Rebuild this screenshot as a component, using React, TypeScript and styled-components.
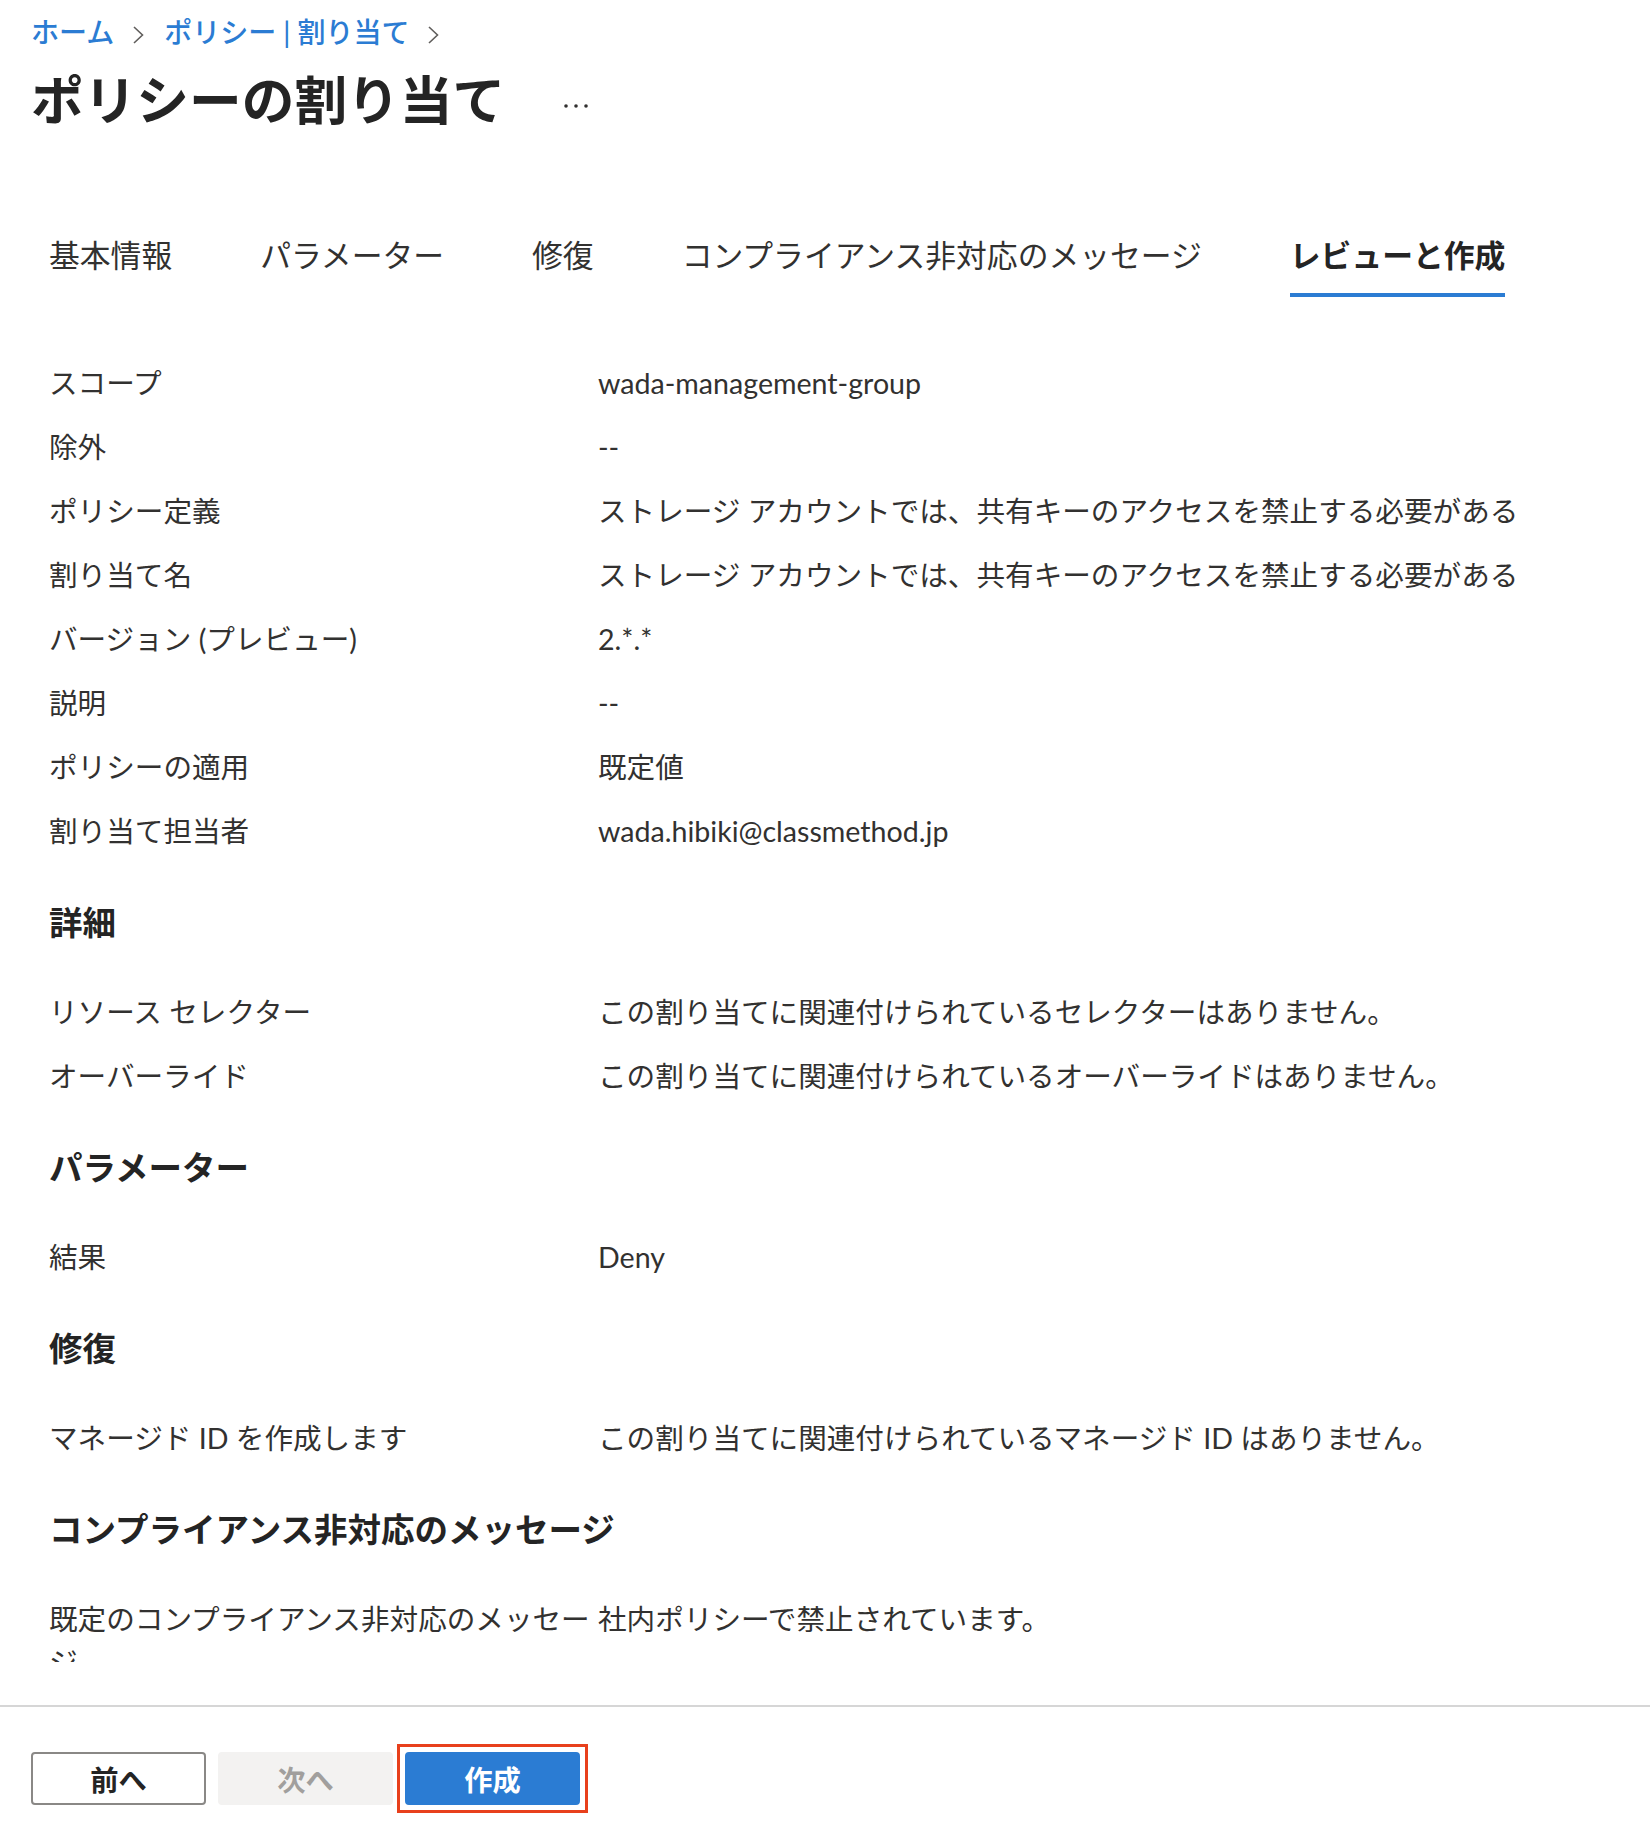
import React from 'react'
import styled, { createGlobalStyle } from 'styled-components'

interface Field {
  label: string
  value: string
}

interface Section {
  title?: string
  fields: Field[]
}

const POLICY_NAME = 'ストレージ アカウントでは、共有キーのアクセスを禁止する必要がある'

const sections: Section[] = [
  {
    fields: [
      { label: 'スコープ', value: 'wada-management-group' },
      { label: '除外', value: '--' },
      { label: 'ポリシー定義', value: POLICY_NAME },
      { label: '割り当て名', value: POLICY_NAME },
      { label: 'バージョン (プレビュー)', value: '2.*.*' },
      { label: '説明', value: '--' },
      { label: 'ポリシーの適用', value: '既定値' },
      { label: '割り当て担当者', value: 'wada.hibiki@classmethod.jp' },
    ],
  },
  {
    title: '詳細',
    fields: [
      { label: 'リソース セレクター', value: 'この割り当てに関連付けられているセレクターはありません。' },
      { label: 'オーバーライド', value: 'この割り当てに関連付けられているオーバーライドはありません。' },
    ],
  },
  {
    title: 'パラメーター',
    fields: [{ label: '結果', value: 'Deny' }],
  },
  {
    title: '修復',
    fields: [
      { label: 'マネージド ID を作成します', value: 'この割り当てに関連付けられているマネージド ID はありません。' },
    ],
  },
  {
    title: 'コンプライアンス非対応のメッセージ',
    fields: [
      { label: '既定のコンプライアンス非対応のメッセージ', value: '社内ポリシーで禁止されています。' },
    ],
  },
]

const tabs = ['基本情報', 'パラメーター', '修復', 'コンプライアンス非対応のメッセージ', 'レビューと作成']

function Chevron() {
  return (
    <Styled.Chevron width="13" height="20" viewBox="0 0 13 20">
      <path d="M2 2 L10.5 10 L2 18" fill="none" stroke="#605e5c" strokeWidth="1.6" />
    </Styled.Chevron>
  )
}

export default function App() {
  return (
    <Styled.Root>
      <GlobalStyle />
      <Styled.Header>
        <Styled.Breadcrumb>
          <Styled.Crumb>ホーム</Styled.Crumb>
          <Chevron />
          <Styled.Crumb>ポリシー | 割り当て</Styled.Crumb>
          <Chevron />
        </Styled.Breadcrumb>
        <Styled.TitleRow>
          <Styled.Title>ポリシーの割り当て</Styled.Title>
          <Styled.MoreButton aria-label="その他">
            <svg width="26" height="6" viewBox="0 0 26 6">
              <circle cx="3" cy="3" r="1.8" fill="#323130" />
              <circle cx="13" cy="3" r="1.8" fill="#323130" />
              <circle cx="23" cy="3" r="1.8" fill="#323130" />
            </svg>
          </Styled.MoreButton>
        </Styled.TitleRow>
      </Styled.Header>

      <Styled.Tabs>
        {tabs.map((tab, i) => (
          <Styled.Tab key={tab} active={i === tabs.length - 1}>
            {tab}
          </Styled.Tab>
        ))}
      </Styled.Tabs>

      <Styled.Content>
        {sections.map((section, i) => (
          <React.Fragment key={i}>
            {section.title && <Styled.SectionTitle>{section.title}</Styled.SectionTitle>}
            {section.fields.map((f) => (
              <Styled.Row key={f.label}>
                <Styled.Label>{f.label}</Styled.Label>
                <Styled.Value>{f.value}</Styled.Value>
              </Styled.Row>
            ))}
          </React.Fragment>
        ))}
      </Styled.Content>

      <Styled.Footer>
        <Styled.Button variant="default">前へ</Styled.Button>
        <Styled.Button variant="disabled">次へ</Styled.Button>
        <Styled.Button variant="primary" highlighted>
          作成
        </Styled.Button>
      </Styled.Footer>
    </Styled.Root>
  )
}

const GlobalStyle = createGlobalStyle`
  html, body {
    margin: 0;
    padding: 0;
    background: #ffffff;
  }
  body {
    font-family: "Lato", "Noto Sans CJK JP", sans-serif;
    color: #323130;
  }
`

const Styled = {
  Root: styled.div`
    display: flex;
    flex-direction: column;
    width: 100%;
    min-height: 100vh;
  `,
  Header: styled.header`
    padding: 11px 31px 0;
  `,
  Breadcrumb: styled.nav`
    display: flex;
    align-items: center;
    height: 43px;
  `,
  Crumb: styled.a`
    font-size: 28px;
    line-height: 43px;
    font-weight: 500;
    color: #2b7cd3;
    white-space: pre;
    cursor: pointer;
  `,
  Chevron: styled.svg`
    margin: 4px 19px 0 18px;
    flex-shrink: 0;
  `,
  TitleRow: styled.div`
    display: flex;
    align-items: center;
    margin-top: 14px;
  `,
  Title: styled.h1`
    margin: 0;
    font-size: 52.7px;
    line-height: 64px;
    font-weight: 700;
    color: #242424;
  `,
  MoreButton: styled.button`
    display: flex;
    align-items: center;
    margin: 12px 0 0 58px;
    padding: 0;
    border: none;
    background: none;
    cursor: pointer;
  `,
  Tabs: styled.div`
    display: flex;
    gap: 88px;
    margin-top: 103px;
    padding-left: 49px;
  `,
  Tab: styled.div<{ active?: boolean }>`
    padding-bottom: 16px;
    border-bottom: 4px solid ${({ active }) => (active ? '#2b7cd3' : 'transparent')};
    font-size: 30.8px;
    line-height: 42px;
    font-weight: ${({ active }) => (active ? 700 : 400)};
    color: ${({ active }) => (active ? '#242424' : '#323130')};
    white-space: nowrap;
    cursor: pointer;
  `,
  Content: styled.main`
    display: flex;
    flex-direction: column;
    margin-top: 65px;
    padding-left: 49px;
  `,
  SectionTitle: styled.h2`
    margin: 26px 0 47px;
    font-size: 33.5px;
    line-height: 44px;
    font-weight: 700;
    color: #242424;
  `,
  Row: styled.div`
    display: grid;
    grid-template-columns: 549px 1fr;
    height: 64px;
    overflow: hidden;
    font-size: 28.6px;
    line-height: 43px;
  `,
  Label: styled.div`
    color: #323130;
  `,
  Value: styled.div`
    color: #323130;
  `,
  Footer: styled.footer`
    display: flex;
    gap: 12px;
    margin-top: 43px;
    padding: 45px 31px 23px;
    border-top: 2px solid #d6d6d6;
  `,
  Button: styled.button<{ variant: 'default' | 'disabled' | 'primary'; highlighted?: boolean }>`
    position: relative;
    display: flex;
    align-items: center;
    justify-content: center;
    box-sizing: border-box;
    width: 175px;
    height: 53px;
    border-radius: 4px;
    border: 2px solid
      ${({ variant }) => (variant === 'default' ? '#8a8886' : variant === 'primary' ? '#2b7cd3' : '#f3f2f1')};
    background: ${({ variant }) => (variant === 'primary' ? '#2b7cd3' : variant === 'disabled' ? '#f3f2f1' : '#ffffff')};
    color: ${({ variant }) => (variant === 'primary' ? '#ffffff' : variant === 'disabled' ? '#a19f9d' : '#242424')};
    font-family: inherit;
    font-size: 28.3px;
    font-weight: 700;
    cursor: ${({ variant }) => (variant === 'disabled' ? 'default' : 'pointer')};

    /* red annotation box drawn around the button */
    &::after {
      content: '';
      display: ${({ highlighted }) => (highlighted ? 'block' : 'none')};
      position: absolute;
      inset: -10px;
      border: 3px solid #e8401c;
      pointer-events: none;
    }
  `,
}
